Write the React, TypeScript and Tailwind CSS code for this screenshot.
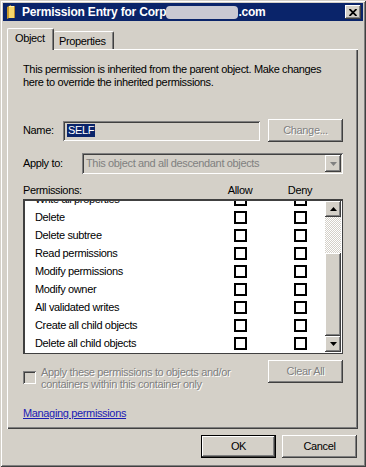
import React from "react";

const ROWS = [
  "Write all properties",
  "Delete",
  "Delete subtree",
  "Read permissions",
  "Modify permissions",
  "Modify owner",
  "All validated writes",
  "Create all child objects",
  "Delete all child objects",
];

const raised =
  "shadow-[inset_-1px_-1px_#404040,inset_1px_1px_#ffffff,inset_-2px_-2px_#808080]";
const sunken =
  "shadow-[inset_1px_1px_#808080,inset_-1px_-1px_#ffffff,inset_2px_2px_#404040,inset_-2px_-2px_#d4d0c8]";

function FolderIcon() {
  return (
    <svg width="10" height="14" viewBox="0 0 10 14">
      <path d="M1 2 L5 0 L5 12 L1 14 Z" fill="#c89a2a" />
      <path d="M3 1 L9 1 L9 13 L3 13 Z" fill="#f4d56a" />
      <path d="M3 1 L9 1 L9 2 L3 2 Z" fill="#fff2b0" />
      <path d="M8 1 L9 1 L9 13 L8 13 Z" fill="#b8862a" />
    </svg>
  );
}

function Check() {
  return <div className="w-[13px] h-[13px] border-2 border-black bg-white" />;
}

function Arrow({ up }: { up?: boolean }) {
  return (
    <div className={`w-[16px] h-[16px] bg-[#d4d0c8] flex items-center justify-center ${raised}`}>
      <svg width="7" height="4" viewBox="0 0 7 4">
        <path d={up ? "M3.5 0 L7 4 L0 4 Z" : "M0 0 L7 0 L3.5 4 Z"} fill="#000" />
      </svg>
    </div>
  );
}

function Button({ label, disabled, primary }: { label: string; disabled?: boolean; primary?: boolean }) {
  return (
    <div
      className={`w-[75px] h-[23px] flex items-center justify-center bg-[#d4d0c8] ${
        primary ? "border border-black shadow-[inset_-1px_-1px_#404040,inset_1px_1px_#ffffff,inset_-2px_-2px_#808080]" : raised
      } ${disabled ? "text-[#808080] [text-shadow:1px_1px_0_#ffffff]" : "text-black"}`}
    >
      {label}
    </div>
  );
}

export default function App() {
  return (
    <div
      className="w-[366px] h-[467px] bg-[#d4d0c8] p-[3px] overflow-hidden text-[11px] leading-[13px] tracking-[-0.35px] text-black shadow-[inset_1px_1px_#d4d0c8,inset_-1px_-1px_#404040,inset_2px_2px_#ffffff,inset_-2px_-2px_#808080]"
      style={{ fontFamily: '"Liberation Sans", Arial, sans-serif' }}
    >
      {/* title bar */}
      <div className="h-[18px] bg-[#0a246a] flex items-center pl-[3px] pr-[2px]">
        <FolderIcon />
        <div className="ml-[6px] flex items-center text-white font-bold text-[12px] tracking-[-0.2px]">
          <span>Permission Entry for Corp</span>
          <span className="inline-block w-[72px] h-[13px] rounded-[4px] bg-[#c9c9d2]" />
          <span>.com</span>
        </div>
        <div className={`ml-auto w-[16px] h-[14px] bg-[#d4d0c8] flex items-center justify-center ${raised}`}>
          <svg width="8" height="7" viewBox="0 0 8 7">
            <path d="M0.5 0 L7.5 7 M7.5 0 L0.5 7" stroke="#000" strokeWidth="1.8" />
          </svg>
        </div>
      </div>

      {/* tabs */}
      <div className="mt-[7px] ml-[4px] h-[21px] flex items-end">
        <div className="relative z-10 -mb-px w-[47px] h-[22px] bg-[#d4d0c8] border-t border-l border-white border-r border-r-[#404040] rounded-t-[2px] shadow-[inset_-1px_0_#808080] pl-[7px] pt-[3px]">
          Object
        </div>
        <div className="w-[60px] h-[18px] bg-[#d4d0c8] border-t border-white border-r border-r-[#404040] rounded-t-[2px] shadow-[inset_-1px_0_#808080] pl-[5px] pt-[3px]">
          Properties
        </div>
      </div>

      {/* panel */}
      <div className="ml-[4px] w-[351px] h-[380px] pl-[16px] pr-[15px] shadow-[inset_1px_1px_#ffffff,inset_-1px_-1px_#404040,inset_-2px_-2px_#808080]">
        <p className="pt-[14px] whitespace-nowrap">
          This permission is inherited from the parent object. Make changes
          <br />
          here to override the inherited permissions.
        </p>

        <div className="mt-[30px] h-[23px] flex items-center">
          <span className="w-[40px]">Name:</span>
          <div className={`w-[197px] h-[20px] flex items-center pl-[4px] ${sunken}`}>
            <span className="bg-[#0a246a] text-white px-[1px] leading-[13px]">SELF</span>
          </div>
          <div className="ml-auto">
            <Button label="Change..." disabled />
          </div>
        </div>

        <div className="mt-[11px] h-[21px] flex items-center">
          <span className="w-[59px]">Apply to:</span>
          <div className={`flex-1 h-[21px] flex items-center pl-[4px] pr-[2px] text-[#808080] ${sunken}`}>
            <span className="flex-1">This object and all descendant objects</span>
            <div className={`w-[16px] h-[17px] flex items-center justify-center ${raised}`}>
              <svg width="7" height="4" viewBox="0 0 7 4">
                <path d="M0 0 L7 0 L3.5 4 Z" fill="#808080" />
              </svg>
            </div>
          </div>
        </div>

        <div className="mt-[9px] h-[14px] flex items-center">
          <span className="w-[197px]">Permissions:</span>
          <span className="w-[40px] text-center">Allow</span>
          <span className="w-[20px]" />
          <span className="w-[40px] text-center">Deny</span>
        </div>

        <div className="mt-[2px] h-[155px] bg-white p-[2px] flex shadow-[inset_1px_1px_#404040,inset_-1px_-1px_#404040,inset_2px_2px_#404040,inset_-2px_-2px_#ffffff]">
          <div className="flex-1 overflow-hidden">
            <div className="-mt-[11px]">
              {ROWS.map((r) => (
                <div key={r} className="h-[18px] flex items-center">
                  <span className="w-[209px] pl-[10px]">{r}</span>
                  <Check />
                  <span className="w-[47px]" />
                  <Check />
                </div>
              ))}
            </div>
          </div>
          <div className="w-[16px] flex flex-col">
            <Arrow up />
            <div className="h-[36px] bg-[repeating-conic-gradient(#d4d0c8_0%_25%,#ffffff_0%_50%)] bg-[length:2px_2px]" />
            <div className={`flex-1 bg-[#d4d0c8] ${raised}`} />
            <Arrow />
          </div>
        </div>

        <div className="mt-[6px] flex">
          <div className="mt-[11px] w-[13px] h-[13px] bg-[#d4d0c8] shadow-[inset_1px_1px_#808080,inset_-1px_-1px_#ffffff,inset_2px_2px_#404040,inset_-2px_-2px_#d4d0c8]" />
          <div className="ml-[5px] mt-[6px] leading-[12px] text-[#808080] [text-shadow:1px_1px_0_#ffffff]">
            Apply these permissions to objects and/or
            <br />
            containers within this container only
          </div>
          <div className="ml-auto">
            <Button label="Clear All" disabled />
          </div>
        </div>

        <div className="mt-[16px] leading-[14px]">
          <span className="text-[#1a1ab4] underline">Managing permissions</span>
        </div>
      </div>

      {/* dialog buttons */}
      <div className="mt-[6px] flex justify-end gap-[6px] pr-[6px]">
        <Button label="OK" primary />
        <Button label="Cancel" />
      </div>
    </div>
  );
}
